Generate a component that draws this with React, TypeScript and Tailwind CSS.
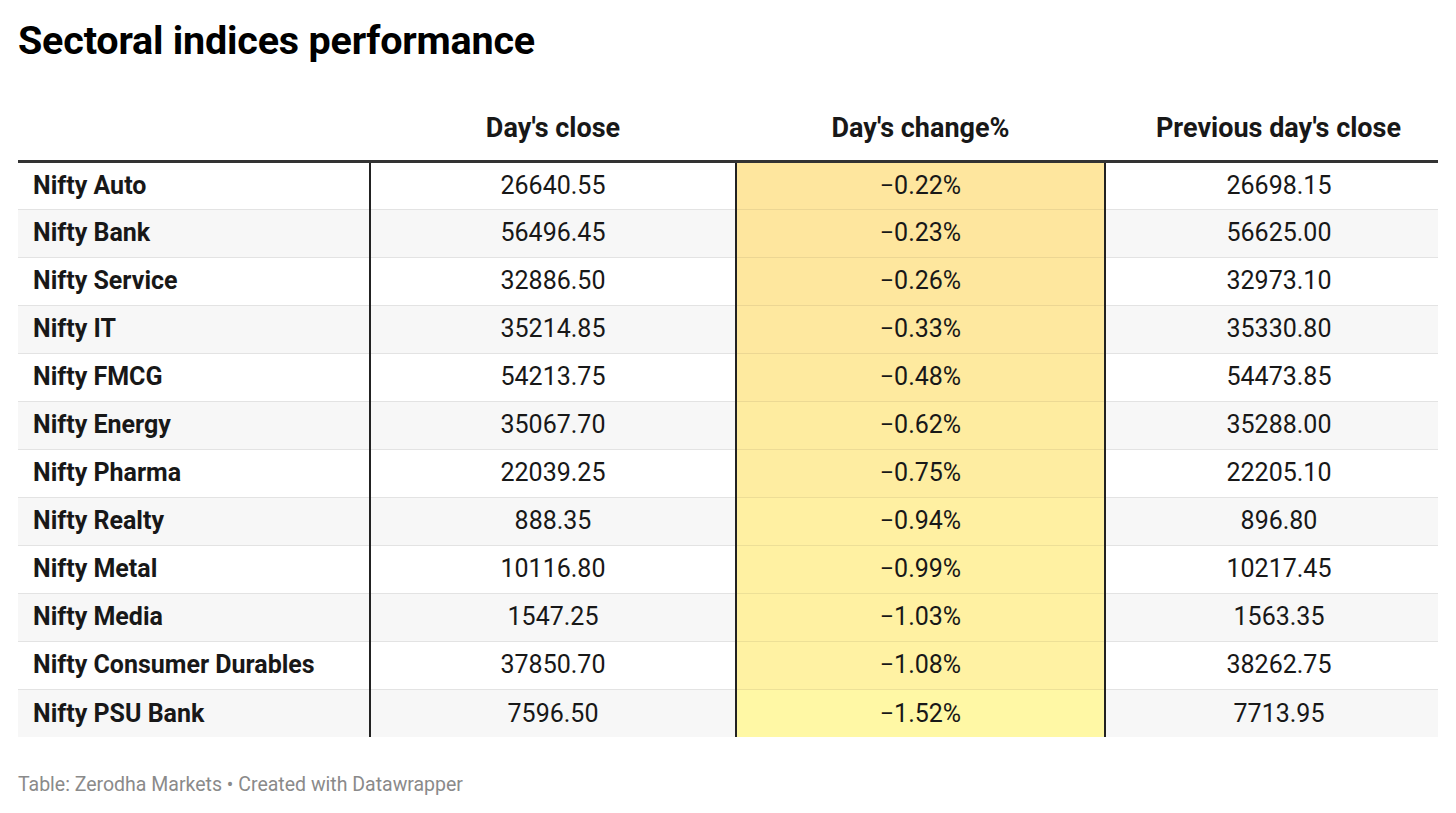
import React from 'react'

interface Row {
  name: string
  close: string
  change: number
  prev: string
}

const rows: Row[] = [
  { name: 'Nifty Auto', close: '26640.55', change: -0.22, prev: '26698.15' },
  { name: 'Nifty Bank', close: '56496.45', change: -0.23, prev: '56625.00' },
  { name: 'Nifty Service', close: '32886.50', change: -0.26, prev: '32973.10' },
  { name: 'Nifty IT', close: '35214.85', change: -0.33, prev: '35330.80' },
  { name: 'Nifty FMCG', close: '54213.75', change: -0.48, prev: '54473.85' },
  { name: 'Nifty Energy', close: '35067.70', change: -0.62, prev: '35288.00' },
  { name: 'Nifty Pharma', close: '22039.25', change: -0.75, prev: '22205.10' },
  { name: 'Nifty Realty', close: '888.35', change: -0.94, prev: '896.80' },
  { name: 'Nifty Metal', close: '10116.80', change: -0.99, prev: '10217.45' },
  { name: 'Nifty Media', close: '1547.25', change: -1.03, prev: '1563.35' },
  { name: 'Nifty Consumer Durables', close: '37850.70', change: -1.08, prev: '38262.75' },
  { name: 'Nifty PSU Bank', close: '7596.50', change: -1.52, prev: '7713.95' },
]

// colour scale: -0.22 -> warm yellow, -1.52 -> pale lemon
function cellColor(v: number, shade = 0) {
  const t = Math.min(1, Math.max(0, (-v - 0.22) / 1.3))
  const from = [254, 230, 158]
  const to = [255, 248, 165]
  const c = from.map((f, i) => Math.round((f + (to[i] - f) * t) * (1 - shade)))
  return `rgb(${c[0]}, ${c[1]}, ${c[2]})`
}

export default function App() {
  return (
    <div
      className="w-[1456px] h-[813px] bg-white text-[#181818] px-[18px] pt-[16px]"
      style={{ fontFamily: 'Roboto, "Liberation Sans", sans-serif' }}
    >
      <h1 className="text-[39.5px] leading-[50px] font-bold text-black tracking-[-0.2px]">
        Sectoral indices performance
      </h1>

      <table className="mt-[34px] w-[1420px] border-collapse table-fixed">
        <colgroup>
          <col className="w-[352px]" />
          <col className="w-[366px]" />
          <col className="w-[369px]" />
          <col className="w-[333px]" />
        </colgroup>
        <thead>
          <tr className="border-b-[3px] border-[#333]">
            <th className="h-[61px]" />
            <th className="text-[27px] font-bold text-center align-bottom pb-[11px]">Day's close</th>
            <th className="text-[27px] font-bold text-center align-bottom pb-[11px]">Day's change%</th>
            <th className="text-[27px] font-bold text-center align-bottom pb-[11px] pl-[14px]">Previous day's close</th>
          </tr>
        </thead>
        <tbody>
          {rows.map((r, i) => {
            const last = i === rows.length - 1
            return (
              <tr
                key={r.name}
                className={`h-[48px] ${i % 2 === 1 ? 'bg-[#f7f7f7]' : 'bg-white'} ${
                  last ? '' : 'border-b border-[#e3e3e3]'
                }`}
              >
                <td className="pl-[15px] text-[25px] font-bold border-r-2 border-[#222] whitespace-nowrap">
                  {r.name}
                </td>
                <td className="text-[25px] text-center border-r-2 border-[#222]">{r.close}</td>
                <td
                  className={`text-[25px] text-center border-r-2 border-r-[#222] ${last ? '' : 'border-b'}`}
                  style={{
                    backgroundColor: cellColor(r.change),
                    borderBottomColor: last ? undefined : cellColor(r.change, 0.07),
                  }}
                >
                  −{Math.abs(r.change).toFixed(2)}%
                </td>
                <td className="text-[25px] text-center pl-[14px]">{r.prev}</td>
              </tr>
            )
          })}
        </tbody>
      </table>

      <p className="mt-[33px] text-[19.5px] text-[#8a8a8a]">
        Table: Zerodha Markets • Created with Datawrapper
      </p>
    </div>
  )
}
